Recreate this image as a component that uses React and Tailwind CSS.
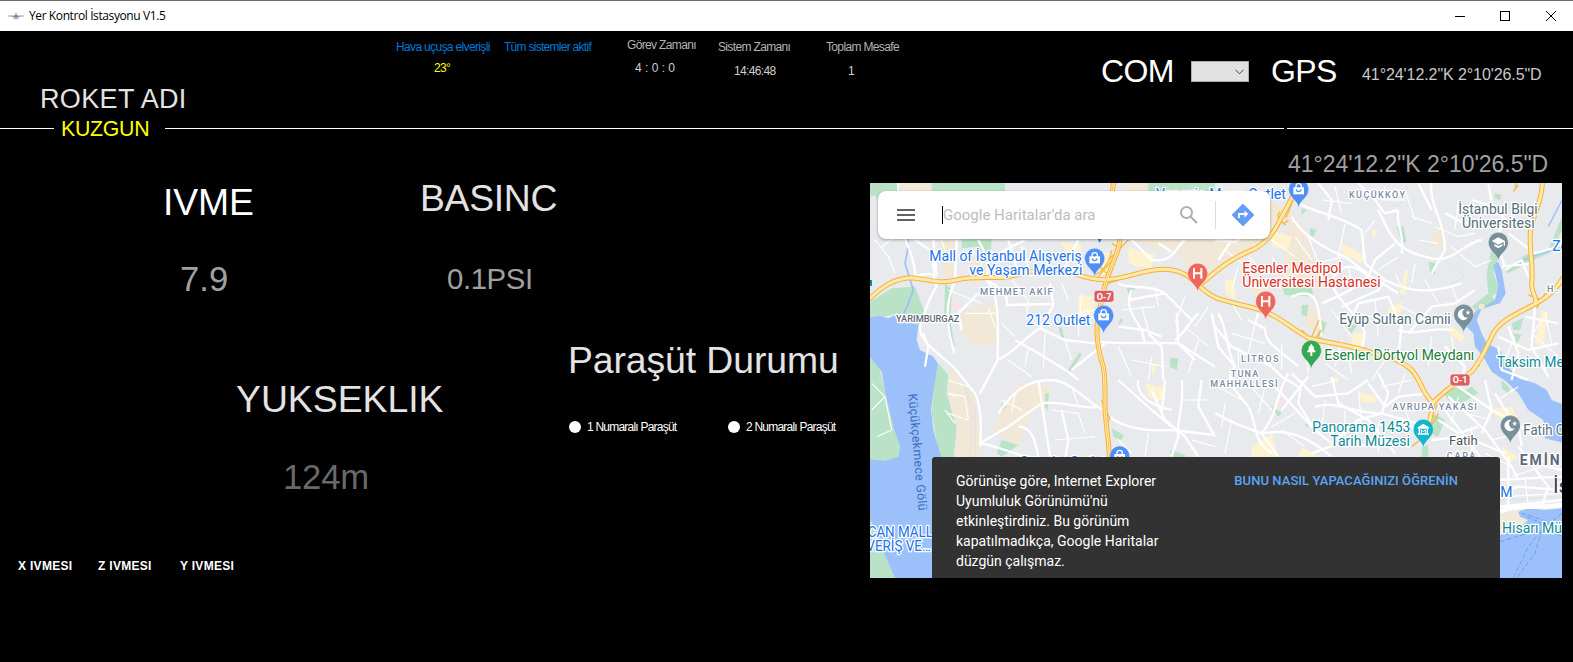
import React from "react";

const HIGHWAYS = [
  "M0 368C60 312 90 295 140 293C195 300 225 312 275 300C330 287 380 297 430 290C490 276 540 262 600 272C650 288 680 300 725 299C790 296 830 268 900 268C950 270 975 290 1000 315C1030 345 1045 350 1060 356C1110 372 1150 378 1195 392C1250 415 1280 445 1330 474C1380 488 1450 492 1520 518C1580 535 1630 545 1655 590C1672 620 1680 650 1704 668",
  "M748 0C738 40 735 70 740 110C768 150 770 180 755 220C740 260 730 280 724 305C712 340 705 380 697 430C692 480 702 520 715 560C722 600 720 640 720 690C724 740 730 780 735 840",
  "M1304 0C1285 50 1265 85 1245 120C1225 165 1190 200 1150 215C1110 232 1075 255 1040 285L1000 318",
  "M2100 285C2080 320 2050 352 2010 372C1960 400 1905 420 1885 460C1865 500 1850 540 1820 575C1790 600 1750 620 1704 668",
  "M2032 0C2034 50 2012 90 1998 140C1988 200 2008 260 2000 310C1998 340 2020 355 2010 372",
  "M1704 668C1700 700 1690 730 1690 760",
];

const RAMPS = [
  "M690 285C720 270 735 240 740 210M700 290L750 230M712 315L760 300M730 240L790 180M690 235C700 260 720 280 735 285M740 190L765 205",
  "M1245 95C1230 110 1250 145 1270 120M1240 120L1262 135M1285 60L1262 115",
  "M1340 470L1362 420M1350 478L1370 450M1310 450L1350 490",
  "M1990 345L2030 360M2040 340L2015 385M1820 570L1845 555M1805 600L1840 540",
  "M1690 655L1720 665L1710 690L1690 670M1640 800C1670 780 1700 740 1720 700",
  "M710 660L722 690L735 715L725 730M1000 318L1050 270",
  "M1945 35L1960 15M1950 30L1955 0",
];

const MAJOR = [
  "M98 0C105 80 110 150 130 200C145 240 150 270 150 285C165 290 185 275 205 285L215 320C190 350 180 400 165 440C160 480 220 520 265 560L330 640C350 680 350 740 345 800",
  "M150 180L195 210L210 285M205 180L215 290M275 180L270 300C250 350 240 400 255 470L268 520",
  "M340 180L370 240L430 205L480 180M370 240L365 300C400 340 400 400 398 540L345 640",
  "M398 540C460 510 490 460 525 445L565 375L555 310M450 480L520 520L610 575L640 600M525 445L600 480L690 490",
  "M365 300C420 330 430 350 425 375L560 372",
  "M800 180L860 240C930 250 930 200 960 180M880 190L920 215M760 310C790 330 850 310 900 340L980 420M800 330C780 380 800 400 830 450L840 490",
  "M700 485C780 495 850 485 940 490L1050 560M850 460L890 500L895 600M935 400L940 490L990 540M790 360L900 340",
  "M1000 400C970 430 960 460 930 480M1040 400L1060 500L1110 560M760 440L840 450L890 470",
  "M400 700C440 640 480 600 560 600C620 600 690 690 720 690M345 790L430 740L530 670C590 660 650 690 700 680",
  "M345 790C420 800 470 840 520 830C510 780 500 740 460 740M520 600L555 830M600 840L610 780L590 690",
  "M720 700C770 745 840 755 920 750L1050 765M760 600L860 690L920 740M860 630L900 720L960 770L1000 830",
  "M900 600L890 700M950 600C960 680 930 740 940 770L920 830M1010 600L1000 680L1050 770M820 600C810 650 870 680 920 690",
  "M1060 400C1090 450 1080 500 1110 560L1100 600M1150 420L1200 445C1200 490 1230 500 1300 560M1180 400L1170 430",
  "M1050 180L1110 185L1180 140M1100 180L1060 240M1280 110C1300 150 1360 200 1440 230L1520 290L1600 340",
  "M1300 70C1360 100 1430 110 1490 150L1500 250L1560 300M1360 10L1400 60L1390 120M1480 10L1530 60L1560 100L1600 90",
  "M1540 90C1580 180 1600 210 1680 230C1760 260 1790 190 1850 180M1590 190L1530 240L1510 290M1600 90C1590 130 1620 160 1610 220",
  "M1700 0C1690 80 1740 120 1740 210L1700 280M1740 100L1800 130L1850 120M1660 10L1700 90",
  "M1400 300C1420 260 1460 240 1510 290C1480 320 1420 350 1370 370M1280 350C1370 310 1360 400 1370 470M1400 310C1420 370 1480 400 1500 460L1490 510",
  "M1560 300C1640 340 1700 340 1790 310M1430 380L1540 330L1560 300M1450 440L1480 370L1570 350L1610 440L1600 530",
  "M1870 10L1880 70L1920 120L1890 180L1920 260M1820 60L1890 80M1930 160L2010 220L2080 200M1910 260L2000 250M1920 270L1970 240L1990 290",
  "M1600 450C1650 470 1700 440 1760 450M1830 330L1770 370L1700 380L1630 460M1740 500L1800 560L1790 600",
  "M1900 470L1990 510L2080 490M1930 440L1960 520L1940 600M1980 410L2080 430M2010 380L2000 500L2050 590M1900 500L1910 570L1990 600",
  "M1050 440L1100 500L1220 560M1180 520L1250 590L1300 620M1110 560C1070 600 1120 640 1150 680M1270 580C1230 650 1240 700 1190 760",
  "M1280 580L1350 650L1450 640L1510 600M1310 600L1300 670L1350 750L1400 790M1230 620L1350 750M1250 690L1330 590",
  "M1150 680C1180 740 1160 780 1220 820M1050 700L1110 730L1190 760L1240 830M1350 680C1420 660 1450 700 1550 700L1690 740",
  "M1400 590L1420 670L1510 720L1590 820M1510 610L1560 680L1600 650L1690 640M1540 580L1570 640L1550 700",
  "M1400 790L1480 720L1550 700M1340 820L1420 790L1540 800M1190 760C1300 740 1360 800 1400 830",
  "M1750 650L1860 750L1940 860L1960 900M1740 690L1860 850M1780 620L1880 690L1850 760M1860 600L1880 690L1960 730L1970 800",
  "M1720 720L1780 760L1840 740M1700 780L1800 770L1920 820M1930 830L1930 990M1900 900L2091 890M1990 840L2050 920L2030 980",
  "M1890 640L1940 720L2010 770M1960 800L2000 850L2091 870M1905 980L2091 960M1905 940L1960 920L2091 930",
  "M180 560L190 500L175 460M470 200L500 290M600 260L640 180",
  "M290 450L280 400L340 340M640 400L700 420M620 570L720 490M430 180L460 280",
];

const MINOR = [
  "M30 180L70 230L90 280M50 200L90 170M230 180L250 240M320 210L350 240L345 290M300 400L390 400M370 385L390 440M410 430L450 470M430 540L500 590M490 500L480 560M540 460L535 560M600 480L620 540M590 310L610 360M440 300L490 360L485 400M250 330L350 370",
  "M650 340L640 470M640 400L690 390M770 390L870 380M830 380L850 450M870 320L880 380M960 350L930 430M1030 380L990 440M960 440L1030 500M1000 480L970 580M760 500L800 590M860 530L850 600M800 540L900 560",
  "M250 600L310 620M250 640L300 650L310 720M250 700L310 720M410 660L470 690M450 640L440 700M560 690L640 700L660 760M570 780L690 770M620 620L640 680M760 780L800 820M850 760L840 830M960 660L1030 660M980 780L1050 800",
  "M1080 210L1130 250M1120 260L1100 330M1150 230L1200 280M1220 230L1270 300M1330 170L1380 300M1290 170L1340 240M1220 180L1290 230M1350 250L1440 230M1440 130L1420 230M1370 60L1460 70M1410 20L1430 100M1530 120L1500 160M1560 20L1550 60L1620 60M1620 30L1650 120",
  "M1640 110L1700 130M1660 180L1720 190M1650 250L1640 310M1710 140L1780 170L1830 160M1780 60L1770 150M1760 200L1830 260L1880 240M1450 260L1460 320M1540 270L1600 230M1590 280L1610 320M1680 300L1720 370M1760 320L1780 370M1610 380L1710 430M1530 360L1540 470M1480 400L1560 420M1400 390L1460 470M1430 480L1410 560",
  "M1100 370L1130 420M1100 460L1200 490M1120 500L1120 570M1170 430L1150 520M1250 490L1250 570M1320 500L1330 580M1380 550L1450 600M1450 520L1460 580M1560 540L1520 600M1620 580L1600 640M1700 470L1690 560M1760 470L1770 540",
  "M1060 620L1130 660M1080 670L1070 740M1100 720L1080 820M1140 600L1220 690M1200 620L1180 700M1250 750L1320 800M1290 700L1220 740M1340 620L1420 600M1380 660L1370 750M1440 690L1440 790M1480 630L1490 730M1550 620L1640 600M1620 690L1650 760M1540 730L1540 820",
  "M1780 650L1760 730M1800 700L1880 720M1820 740L1820 830M1880 780L1960 760M1860 820L1940 860M1940 890L2030 860M1980 900L1990 980M1920 950L2091 940M1960 620L1900 660M2000 460L2080 530M1950 470L1920 540M2040 400L2060 490M2030 420L2000 470",
];

const GREENS = [
  "M15 9H100L120 90L95 70L60 90L30 45L15 50Z",
  "M290 178H380L375 235L330 200L290 205Z",
  "M15 365L80 325L150 320L160 345L180 400L160 440L100 400L15 420Z",
  "M240 310L262 330L255 420L270 500L255 490L238 400Z",
  "M15 520L45 570L62 645L105 805L95 850L15 840Z",
  "M215 545L250 585L245 640L275 745L265 840L225 840L200 700Z",
  "M15 1005L45 1080L90 1194H15Z",
  "M645 515L650 525L615 575L608 570ZM785 325L810 320L800 345L790 340ZM580 440L592 445L598 480L588 470ZM915 535L940 535L935 570L915 560ZM765 415L775 420L760 440Z",
  "M410 780L460 795L410 830L395 820ZM540 640L552 640L548 690L540 680ZM740 745L775 765L770 780L745 770ZM915 810L960 825L960 840L920 830ZM410 670L425 680L408 695Z",
  "M200 9H420V35H200ZM850 9H1050V35H850Z",
  "M1250 320L1340 320L1345 350L1260 345ZM1310 375L1330 375L1325 410L1310 405ZM1335 145L1355 150L1345 170L1335 165ZM1310 85L1325 90L1310 105ZM1595 140L1615 140L1625 185L1610 190ZM1690 245L1710 250L1710 285L1695 275Z",
  "M1885 180L1905 180L1895 260L1885 280L1905 330L1880 350L1900 370L1840 395L1820 380L1870 340L1865 280Z",
  "M1920 270L1980 225L2050 210L2091 110V150L2060 215L1985 250L1930 280ZM1890 40L1910 45L1905 60L1888 55ZM1940 430L1975 415L1965 450L1945 450ZM1945 460L1970 465L1955 490Z",
  "M1735 635L1760 620L1800 630L1820 620L1840 640L1790 670L1750 660ZM1705 700L1740 720L1720 770L1690 760ZM1670 800L1690 795L1690 830L1670 830ZM1910 600L1935 625L1930 640L1910 625ZM1215 675L1250 700L1240 710ZM1320 730L1330 735L1325 745ZM1370 420L1385 430L1360 500L1350 490ZM1440 440L1480 430L1460 460ZM1740 620L1760 635L1745 655Z",
];

const BEIGES = [
  "M80 9H230V35H80ZM125 9L150 35L110 35ZM290 390L400 370L395 490L330 500L290 460Z",
  "M220 180H280L270 290L240 290ZM310 230L375 235L360 300L320 310ZM255 560L330 650L350 840H272L275 745L250 640Z",
  "M430 670L460 610L560 620L540 680L500 690L460 800L380 750Z",
  "M800 180H1210L1180 210L1060 255L1000 300L930 210L870 210ZM780 9H900V35H780Z",
  "M1270 90L1310 135L1380 330L1330 325L1255 300ZM1700 160L1740 145L1730 200L1700 210ZM1150 300H1210L1180 380ZM1310 380L1370 390L1370 460L1325 440ZM1905 990L1985 1000L1985 1035L1905 1060ZM15 1090L70 1110L30 1160Z",
  "M1100 35L1260 80L1220 180L1100 180Z",
];

const YELLOWS = [
  "M790 200L830 215L870 225L860 265L810 260L790 245ZM640 345L690 350L680 410L640 400ZM590 185L650 195L640 240L600 215ZM840 610L880 620L905 625L895 665L850 650ZM860 550L875 560L860 590ZM680 215L735 220L735 290L690 270Z",
  "M1220 150L1280 170L1270 210L1220 200ZM1430 190L1505 230L1490 250L1430 220ZM1520 150L1540 150L1525 180ZM1620 270L1630 270L1620 345L1605 340ZM1460 460L1500 460L1490 510L1460 495ZM1570 385L1615 365L1600 420L1570 410ZM1080 300L1110 300L1110 360L1080 340ZM1750 430L1800 470L1790 490L1755 460Z",
  "M1160 800L1220 760L1240 830H1160ZM1480 635L1540 650L1530 670L1490 665ZM1300 830L1310 800L1360 830ZM1870 690L1940 680L1970 740L1960 750ZM2030 390L2050 400L2035 500L2010 490ZM1850 560L1940 590L1920 600ZM1390 600L1420 590L1420 610ZM1120 590L1140 600L1130 630ZM1910 800L1960 830L1930 850Z",
];

const WATERS = [
  "M15 412L45 408L70 415L105 398L130 425L160 435L155 480L165 510L205 530L218 550L213 585L205 640L198 690L205 750L225 820L240 850V1194H90L60 1125L15 1015V838L60 842L100 830L105 800L88 750L62 645L50 575L15 530Z",
  "M1885 255L1900 245L1910 270L1922 340L1905 370L1850 385L1835 420L1850 460L1865 490L1905 510L1930 560L1960 595L2010 610L2045 630L2060 660L2100 675V790L2040 775L2035 720L1990 690L1960 640L1925 605L1880 575L1855 530L1830 500L1825 460L1805 440L1830 395L1890 360L1900 320Z",
  "M1960 995L1990 985L2040 990L2091 985V1194H1905V1065L1960 1045L1990 1020L1965 1010Z",
];

const HALO = "[paint-order:stroke] stroke-white [stroke-width:8px] [stroke-linejoin:round]";

function Label({ x, y, len, children, className, size = 42, spacing = false }) {
  return (
    <text
      x={x}
      y={y}
      fontSize={size}
      textLength={len}
      lengthAdjust={spacing ? "spacing" : "spacingAndGlyphs"}
      className={`${HALO} ${className}`}
    >
      {children}
    </text>
  );
}

function Pin({ x, y, className, children }) {
  return (
    <g transform={`translate(${x} ${y})`}>
      <path
        d="M0 56C-2 34 -30 26 -30 0A30 30 0 0 1 30 0C30 26 2 34 0 56Z"
        className={`${className} stroke-white/60 [stroke-width:1.5px]`}
      />
      {children}
    </g>
  );
}

const Bag = () => (
  <g>
    <path d="M-16 -6H16V15H-16Z" className="fill-white" />
    <path d="M-8 -4V-9A8 8 0 0 1 8 -9V-4" className="fill-none stroke-white [stroke-width:4px]" />
    <path d="M-7 0A7 7 0 0 0 7 0" className="fill-none stroke-[#4f8ff7] [stroke-width:3.5px]" />
  </g>
);

const Hospital = () => (
  <path d="M-11 -16V16M11 -16V16M-11 0H11" className="fill-none stroke-white [stroke-width:6px]" />
);

const Crescent = () => (
  <g className="fill-white">
    <path d="M4 -16A17 17 0 1 0 14 9A13.500 13.500 0 0 1 4 -16Z" />
    <path d="M13 -14L15 -8H21L16 -4L18 2L13 -2L8 2L10 -4L5 -8H11Z" />
  </g>
);

function Shield({ x, y, children }) {
  return (
    <g>
      <rect x={x} y={y} width="60" height="36" rx="9" className="fill-[#d95f63] stroke-white [stroke-width:2px]" />
      <text x={x + 8} y={y + 28} fontSize="27" textLength="44" className="fill-white font-bold">
        {children}
      </text>
    </g>
  );
}

function CityMap() {
  return (
    <svg width="692" height="395" viewBox="0 0 692 395" className="block [font-family:Roboto,sans-serif]">
      <g transform="translate(-5 -3) scale(0.33333)">
        <rect x="0" y="0" width="2110" height="1210" className="fill-[#e8eaed]" />
        <g className="fill-[#f1e8d7]">{BEIGES.map((d) => <path key={d} d={d} />)}</g>
        <g className="fill-[#fdf3cf]">{YELLOWS.map((d) => <path key={d} d={d} />)}</g>
        <g className="fill-[#b9e2c6]">{GREENS.map((d) => <path key={d} d={d} />)}</g>
        <path d="M258 365L285 365L285 395L262 390ZM1235 640L1255 640L1255 670L1238 680ZM415 615L440 615L430 635Z" className="fill-[#fbe3e4]" />
        <g className="fill-none stroke-[#dfe1e6] [stroke-width:3px]">
          <path d="M1560 60L1600 80L1630 20M1740 240L1800 290L1760 310M1560 420L1640 430M1380 540L1400 590M1060 440L1110 430M290 600L330 690L330 830M300 620L320 700L315 830M1905 960L2091 950" />
        </g>
        <g className="fill-[#9cc0f9]">{WATERS.map((d) => <path key={d} d={d} />)}</g>
        <path d="M100 20L120 90L130 200L120 250L145 330L130 370L115 405" className="fill-none stroke-[#9cc0f9] [stroke-width:5px]" />
        <path d="M2091 60L2050 140M2091 200L2000 230L1920 265" className="fill-none stroke-[#9cc0f9] [stroke-width:4px]" />
        <g className="fill-none stroke-white [stroke-linejoin:round] [stroke-width:3.5px]">
          {MINOR.map((d) => <path key={d} d={d} />)}
          <path d="M20 610L60 650L80 750L35 770M20 690L60 650M250 640L270 650M240 690L270 730" />
        </g>
        <g className="fill-none stroke-white [stroke-linejoin:round] [stroke-width:7px]">
          {MAJOR.map((d) => <path key={d} d={d} />)}
        </g>
        <path d="M1905 995C1960 970 2030 985 2091 975" className="fill-none stroke-white [stroke-width:14px]" />
        <g className="fill-none stroke-[#6e9fee] [stroke-width:3px]" strokeDasharray="14 7">
          <path d="M1970 1000L2050 1025M1985 1010L2040 1035M2091 1000L2030 1050L1990 1100L1945 1194M2030 1050L2010 1120L1955 1194M1905 1085L2020 1050M2040 1040L2091 1070" />
        </g>
        <g className="fill-none stroke-[#fbb941] [stroke-width:4px]">{RAMPS.map((d) => <path key={d} d={d} />)}</g>
        <g className="fill-none stroke-[#f9b22c] [stroke-linejoin:round] [stroke-width:15px]">
          {HIGHWAYS.map((d) => <path key={d} d={d} />)}
        </g>
        <g className="fill-none stroke-[#fde8b0] [stroke-linejoin:round] [stroke-width:9px]">
          {HIGHWAYS.map((d) => <path key={d} d={d} />)}
        </g>
        <path d={HIGHWAYS[1]} className="fill-none stroke-[#f9b22c] [stroke-width:2px]" />
        <circle cx="1850" cy="380" r="9" className="fill-[#f1e8d7]" />

        <Label x="193" y="244" len="457" className="fill-[#1a73e8]">Mall of İstanbul Alışveriş</Label>
        <Label x="313" y="285" len="339" className="fill-[#1a73e8]">ve Yaşam Merkezi</Label>
        <Label x="345" y="345" len="218" size={28} spacing className="fill-[#7b8ba5] font-medium">MEHMET AKİF</Label>
        <Label x="93" y="426" len="190" size={27} className="fill-[#5f6878] font-medium">YARIMBURGAZ</Label>
        <Label x="484" y="435" len="192" className="fill-[#1a73e8]">212 Outlet</Label>
        <Label x="873" y="56" len="390" className="fill-[#1a73e8]">Venezia Mega Outlet</Label>
        <Label x="1452" y="54" len="168" size={27} spacing className="fill-[#7b8ba5] font-medium">KÜÇÜKKÖY</Label>
        <Label x="1780" y="101" len="238" className="fill-[#546e7a]">İstanbul Bilgi</Label>
        <Label x="1791" y="144" len="218" className="fill-[#546e7a]">Üniversitesi</Label>
        <Label x="2062" y="212" className="fill-[#1a73e8]">Ze</Label>
        <Label x="2046" y="336" len="32" size={27} spacing className="fill-[#7b8ba5] font-medium">H.</Label>
        <Label x="1132" y="279" len="298" className="fill-[#d93025]">Esenler Medipol</Label>
        <Label x="1132" y="321" len="415" className="fill-[#d93025]">Üniversitesi Hastanesi</Label>
        <Label x="1423" y="432" len="334" className="fill-[#546e7a]">Eyüp Sultan Camii</Label>
        <Label x="1378" y="540" len="450" className="fill-[#188038]">Esenler Dörtyol Meydanı</Label>
        <Label x="1128" y="546" len="112" size={27} spacing className="fill-[#7b8ba5] font-medium">LİTROS</Label>
        <Label x="1097" y="592" len="83" size={27} spacing className="fill-[#7b8ba5] font-medium">TUNA</Label>
        <Label x="1036" y="621" len="202" size={27} spacing className="fill-[#7b8ba5] font-medium">MAHHALLESİ</Label>
        <Label x="1896" y="562" len="200" className="fill-[#0f8c98]">Taksim Me</Label>
        <Label x="1582" y="690" len="254" size={28} spacing className="fill-[#7b8ba5] font-medium">AVRUPA YAKASI</Label>
        <Label x="1342" y="756" len="294" className="fill-[#0f8c98]">Panorama 1453</Label>
        <Label x="1396" y="799" len="239" className="fill-[#0f8c98]">Tarih Müzesi</Label>
        <Label x="1752" y="794" len="86" size={40} className="fill-[#4d5560]">Fatih</Label>
        <Label x="1745" y="838" len="86" size={27} spacing className="fill-[#7b8ba5] font-medium">ÇAPA</Label>
        <Label x="1975" y="764" len="123" className="fill-[#546e7a]">Fatih C</Label>
        <Label x="1964" y="854" len="120" size={42} spacing className="fill-[#5f6878] font-bold">EMİN</Label>
        <Label x="2064" y="938" size={62} className="fill-[#3c4350]">İs</Label>
        <Label x="1906" y="951" className="fill-[#1a73e8]">M</Label>
        <Label x="1911" y="1059" len="180" className="fill-[#0f8c98]">Hisarı Mü</Label>
        <Label x="466" y="862" len="258" className="fill-[#1a73e8]">Starcity Outlet</Label>
        <Label x="8" y="1071" len="196" className="fill-[#1a73e8]">CAN MALL</Label>
        <Label x="4" y="1113" len="194" className="fill-[#1a73e8]">VERİŞ VE…</Label>
        <text
          x="0"
          y="0"
          fontSize="37"
          textLength="352"
          transform="translate(130 642) rotate(85)"
          className="fill-[#3b6fc4]"
        >
          Küçükçekmece Gölü
        </text>

        <Shield x={687} y={331}>O-7</Shield>
        <Shield x={1755} y={582}>O-1</Shield>

        <path d="M698 176L704 188L710 176Z" className="fill-[#1a73e8]" />
        <path d="M15 300H21V318H15Z" className="fill-[#0f8c98]" />
        <Pin x={689} y={235} className="fill-[#4f8ff7]"><Bag /></Pin>
        <Pin x={716} y={406} className="fill-[#4f8ff7]"><Bag /></Pin>
        <Pin x={1301} y={28} className="fill-[#4f8ff7]"><Bag /></Pin>
        <Pin x={764} y={828} className="fill-[#4f8ff7]"><Bag /></Pin>
        <Pin x={998} y={280} className="fill-[#ee675c]"><Hospital /></Pin>
        <Pin x={1202} y={364} className="fill-[#ee675c]"><Hospital /></Pin>
        <Pin x={1900} y={187} className="fill-[#78909c]">
          <path d="M-20 -4L0 -15L20 -4V10H16V-1L0 7ZM-12 5L0 11L12 5V11L0 18L-12 11Z" className="fill-white" />
        </Pin>
        <Pin x={1796} y={403} className="fill-[#78909c]"><Crescent /></Pin>
        <Pin x={1936} y={736} className="fill-[#78909c]"><Crescent /></Pin>
        <Pin x={1339} y={511} className="fill-[#34a853]">
          <path d="M0 -20L10 -6H6L14 6H3V17H-3V6H-14L-6 -6H-10Z" className="fill-white" />
        </Pin>
        <Pin x={1675} y={748} className="fill-[#12b5cb]">
          <path d="M-17 -6L0 -17L17 -6V-2H-17ZM-14 -1H-10V12H-14ZM10 -1H14V12H10ZM-17 12H17V16H-17Z" className="fill-white" />
          <path d="M-6 11V1L0 7L6 1V11" className="fill-none stroke-white [stroke-width:3px]" />
        </Pin>
      </g>
    </svg>
  );
}

function TitleBar() {
  return (
    <div className="flex h-[31px] shrink-0 items-center border-t border-[#696969] bg-white">
      <svg width="16" height="10" viewBox="0 0 16 10" className="ml-2 shrink-0">
        <path d="M0 5H16" className="stroke-[#b58f8f]" />
        <path d="M4 5.500H12M8 2V8M5 7H11" className="fill-none stroke-[#8d9499]" />
        <circle cx="8" cy="5" r="1.500" className="fill-[#7c8489]" />
      </svg>
      <span className="ml-[5px] text-[12px] leading-none tracking-[-0.4px] text-black [font-family:'Open_Sans',sans-serif]">
        Yer Kontrol İstasyonu V1.5
      </span>
      <svg width="104" height="11" viewBox="0 0 104 11" shapeRendering="crispEdges" className="ml-auto mr-[15px]">
        <path d="M1 5.500H11" className="stroke-black" />
        <rect x="46.500" y="0.500" width="9" height="9" className="fill-none stroke-black" />
        <path d="M92 0L102 10M102 0L92 10" className="stroke-black" shapeRendering="auto" />
      </svg>
    </div>
  );
}

function Header() {
  return (
    <header className="flex h-[85px] shrink-0 items-start whitespace-nowrap text-[12px] leading-none tracking-[-0.65px]">
      <h1 className="w-[396px] pl-[40px] pt-[55px] text-[27px] leading-none tracking-[0.35px] text-[#e3e3e3]">ROKET ADI</h1>
      <div className="w-[108px] pt-[10px] text-[#0078d7]">
        <p>Hava uçuşa elverişli</p>
        <p className="pl-[38px] pt-[9px] text-[#ffff00]">23°</p>
      </div>
      <p className="w-[123px] pt-[10px] tracking-[-0.72px] text-[#0078d7]">Tüm sistemler aktif</p>
      <div className="w-[91px] pt-[8px] text-[#b4b4b4]">
        <p>Görev Zamanı</p>
        <p className="pl-[8px] pt-[11px] tracking-[0px] text-[#d0d0d0]">4 : 0 : 0</p>
      </div>
      <div className="w-[108px] pt-[10px] text-[#b4b4b4]">
        <p>Sistem Zamanı</p>
        <p className="pl-[16px] pt-[12px] text-[#d0d0d0]">14:46:48</p>
      </div>
      <div className="w-[275px] pt-[10px] text-[#b4b4b4]">
        <p>Toplam Mesafe</p>
        <p className="pl-[22px] pt-[12px] text-[#d0d0d0]">1</p>
      </div>
      <p className="w-[90px] pt-[24px] text-[32px] leading-none text-white">COM</p>
      <button className="mt-[30px] flex h-[21px] w-[58px] items-center justify-end border border-[#adadad] bg-[#e1e1e1] pr-1">
        <svg width="9" height="6" viewBox="0 0 9 6">
          <path d="M0.500 0.800L4.500 4.800L8.500 0.800" className="fill-none stroke-[#444]" />
        </svg>
      </button>
      <p className="ml-[22px] w-[91px] pt-[24px] text-[32px] leading-none text-white">GPS</p>
      <p className="pt-[36px] text-[16px] leading-none tracking-[-0.08px] text-[#c8c8c8]">41°24'12.2"K 2°10'26.5"D</p>
    </header>
  );
}

function Divider() {
  return (
    <div className="flex h-[25px] shrink-0 items-center">
      <div className="h-px w-[54px] bg-white" />
      <p className="w-[111px] pl-[7px] pt-[2px] text-[21.33px] leading-none tracking-[-0.3px] text-[#ffff00]">KUZGUN</p>
      <div className="h-px w-[1119px] bg-white" />
      <div className="h-[2px] w-[3px] bg-[#000030]" />
      <div className="h-px flex-1 bg-white" />
    </div>
  );
}

function Telemetry() {
  return (
    <section className="flex w-[870px] flex-col whitespace-nowrap leading-none">
      <div className="flex h-[200px] leading-none">
        <div className="w-[420px] pl-[163px] pt-[43px]">
          <h2 className="text-[37.33px] leading-none tracking-[-0.1px] text-white">IVME</h2>
          <p className="pl-[17px] pt-[41px] text-[34.67px] leading-none text-[#a0a0a0]">7.9</p>
        </div>
        <div className="pt-[39px]">
          <h2 className="text-[37.33px] leading-none tracking-[-0.3px] text-[#e3e3e3]">BASINC</h2>
          <p className="pl-[27px] pt-[47px] text-[29.33px] leading-none tracking-[-0.4px] text-[#a0a0a0]">0.1PSI</p>
        </div>
      </div>
      <div className="flex h-[218px] leading-none">
        <div className="w-[568px] pl-[236px] pt-[40px]">
          <h2 className="text-[37.33px] leading-none text-[#e3e3e3]">YUKSEKLIK</h2>
          <p className="pl-[47px] pt-[42px] text-[34.67px] leading-none tracking-[-0.2px] text-[#696969]">124m</p>
        </div>
        <div className="pt-px">
          <h2 className="text-[37.33px] leading-none tracking-[-0.08px] text-[#e3e3e3]">Paraşüt Durumu</h2>
          <div className="flex pl-[1px] pt-[42px] text-[12px] leading-none tracking-[-0.78px] text-white">
            <label className="flex w-[159px] items-center gap-[6px]">
              <span className="size-[12px] rounded-full bg-white" />
              1 Numaralı Paraşüt
            </label>
            <label className="flex items-center gap-[6px]">
              <span className="size-[12px] rounded-full bg-white" />
              2 Numaralı Paraşüt
            </label>
          </div>
        </div>
      </div>
      <div className="flex pl-[18px] pt-px text-[12px] font-bold leading-none tracking-[0.3px] text-white">
        <p className="w-[80px]">X IVMESI</p>
        <p className="w-[82px]">Z IVMESI</p>
        <p>Y IVMESI</p>
      </div>
    </section>
  );
}

function MapPanel() {
  return (
    <section className="flex flex-col">
      <p className="h-[42px] pl-[418px] pt-[12px] text-[23px] leading-none tracking-[-0.03px] text-[#a0a0a0]">41°24'12.2"K 2°10'26.5"D</p>
      <div className="relative h-[395px] w-[692px] overflow-hidden [font-family:Roboto,sans-serif]">
        <CityMap />
        <div className="absolute left-2 top-2 flex h-12 w-[392px] items-center rounded-lg bg-white shadow-[0_1px_3px_rgba(0,0,0,0.35)]">
          <svg width="18" height="12" viewBox="0 0 18 12" className="ml-[19px]">
            <path d="M0 1H18M0 6H18M0 11H18" className="fill-none stroke-[#5f6368] [stroke-width:2px]" />
          </svg>
          <span className="ml-[27px] h-[18px] w-px bg-black" />
          <span className="w-[237px] text-[15px] leading-none tracking-[0px] text-[#bdbdbd]">Google Haritalar'da ara</span>
          <svg width="18" height="18" viewBox="0 0 18 18" className="shrink-0">
            <circle cx="6.500" cy="6.500" r="5.500" className="fill-none stroke-[#b0b0b0] [stroke-width:2px]" />
            <path d="M10.500 10.500L17 17" className="stroke-[#b0b0b0] [stroke-width:2.200px]" />
          </svg>
          <span className="ml-[17px] h-7 w-px bg-[#dadce0]" />
          <svg width="22" height="22" viewBox="0 0 22 22" className="ml-4 shrink-0">
            <path d="M11 1L21 11L11 21L1 11Z" strokeLinejoin="round" className="fill-[#669df6] stroke-[#669df6] [stroke-width:2px]" />
            <path d="M7 14V10H13" className="fill-none stroke-white [stroke-width:2px]" />
            <path d="M12.500 6.500L16.300 10L12.500 13.500Z" className="fill-white" />
          </svg>
        </div>
        <div className="absolute bottom-0 left-[62px] flex h-[121px] w-[568px] justify-between rounded-t-[3px] bg-[#323232] pl-6 pr-[42px] pt-[14px] text-[14px] leading-5 text-white">
          <p className="w-[216px]">
            Görünüşe göre, Internet Explorer Uyumluluk Görünümü'nü etkinleştirdiniz. Bu görünüm kapatılmadıkça, Google
            Haritalar düzgün çalışmaz.
          </p>
          <button className="h-5 whitespace-nowrap text-[13px] font-medium tracking-[0.06px] text-[#5ba5f5]">
            BUNU NASIL YAPACAĞINIZI ÖĞRENİN
          </button>
        </div>
      </div>
    </section>
  );
}

export default function App() {
  return (
    <div className="flex h-[662px] w-[1573px] flex-col overflow-hidden bg-black [font-family:'Liberation_Sans',Arial,sans-serif]">
      <TitleBar />
      <Header />
      <Divider />
      <main className="flex flex-1">
        <Telemetry />
        <MapPanel />
      </main>
    </div>
  );
}
